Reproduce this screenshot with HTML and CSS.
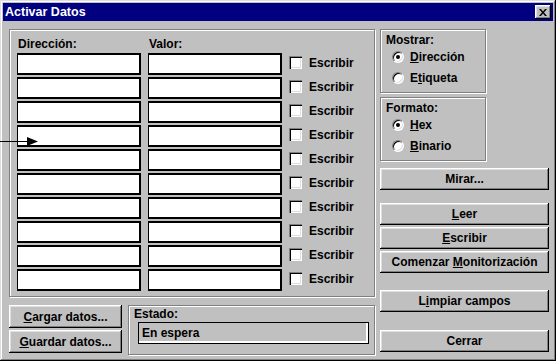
FILE: index.html
```html
<!DOCTYPE html>
<html lang="es">
<head>
    <meta charset="UTF-8">
    <title>Activar Datos</title>
    <link rel="stylesheet" href="styles.css">
</head>
<body>
    <div class="window">
        <div class="titlebar">
            <span class="title">Activar Datos</span>
            <span class="close">
                <svg width="8" height="7" viewBox="0 0 8 7"><path d="M0 0h2l2 2.5L6 0h2L5 3.5 8 7H6L4 4.5 2 7H0l3-3.5z" fill="#000"/></svg>
            </span>
        </div>

        <div class="content">
            <div class="main">
                <div class="group fields">
                    <div class="field-grid">
                        <span class="label">Dirección:</span>
                        <span class="label">Valor:</span>
                        <span></span>
                        <span></span>

                        <div class="edit"></div><div class="edit"></div><span class="check"></span><span class="check-label">Escribir</span>
                        <div class="edit"></div><div class="edit"></div><span class="check"></span><span class="check-label">Escribir</span>
                        <div class="edit"></div><div class="edit"></div><span class="check"></span><span class="check-label">Escribir</span>
                        <div class="edit"></div><div class="edit"></div><span class="check"></span><span class="check-label">Escribir</span>
                        <div class="edit"></div><div class="edit"></div><span class="check"></span><span class="check-label">Escribir</span>
                        <div class="edit"></div><div class="edit"></div><span class="check"></span><span class="check-label">Escribir</span>
                        <div class="edit"></div><div class="edit"></div><span class="check"></span><span class="check-label">Escribir</span>
                        <div class="edit"></div><div class="edit"></div><span class="check"></span><span class="check-label">Escribir</span>
                        <div class="edit"></div><div class="edit"></div><span class="check"></span><span class="check-label">Escribir</span>
                        <div class="edit"></div><div class="edit"></div><span class="check"></span><span class="check-label">Escribir</span>
                    </div>
                </div>

                <div class="bottom">
                    <div class="file-buttons">
                        <div class="button"><span><u>C</u>argar datos...</span></div>
                        <div class="button"><span><u>G</u>uardar datos...</span></div>
                    </div>
                    <div class="group status">
                        <span class="label">Estado:</span>
                        <div class="status-field">En espera</div>
                    </div>
                </div>
            </div>

            <div class="side">
                <div class="group options">
                    <span class="label">Mostrar:</span>
                    <div class="radio-row"><span class="radio checked"></span><span><u>D</u>irección</span></div>
                    <div class="radio-row"><span class="radio"></span><span>E<u>t</u>iqueta</span></div>
                </div>
                <div class="group options format">
                    <span class="label">Formato:</span>
                    <div class="radio-row"><span class="radio checked"></span><span><u>H</u>ex</span></div>
                    <div class="radio-row"><span class="radio"></span><span><u>B</u>inario</span></div>
                </div>

                <div class="button mirar"><span>Mirar...</span></div>
                <div class="button leer"><span><u>L</u>eer</span></div>
                <div class="button tight"><span><u>E</u>scribir</span></div>
                <div class="button tight"><span>Comenzar <u>M</u>onitorización</span></div>
                <div class="button limpiar"><span>L<u>i</u>mpiar campos</span></div>
                <div class="button cerrar"><span>Cerrar</span></div>
            </div>
        </div>

        <svg class="pointer" width="40" height="12" viewBox="0 0 40 12">
            <line x1="0" y1="5.5" x2="28" y2="5.5" stroke="#000" stroke-width="1"/>
            <polygon points="27,1 38,5.5 27,10" fill="#000"/>
        </svg>
    </div>
</body>
</html>
```

FILE: styles.css
```css
* {
    box-sizing: border-box;
}

body {
    margin: 0;
    font-family: 'Liberation Sans', Arial, sans-serif;
    font-size: 12px;
    font-weight: bold;
    color: #000;
    background: #c0c0c0;
}

.window {
    position: relative;
    width: 556px;
    height: 361px;
    padding: 3px;
    background: #c0c0c0;
    box-shadow: inset -1px -1px 0 #000, inset 1px 1px 0 #dfdfdf,
                inset -2px -2px 0 #808080, inset 2px 2px 0 #fff;
}

.titlebar {
    display: flex;
    align-items: center;
    justify-content: space-between;
    height: 18px;
    padding: 0 2px;
    background: #000080;
    color: #fff;
}

.title {
    font-size: 12.5px;
}

.close {
    display: flex;
    align-items: center;
    justify-content: center;
    width: 16px;
    height: 14px;
    background: #c0c0c0;
    box-shadow: inset -1px -1px 0 #000, inset 1px 1px 0 #fff,
                inset -2px -2px 0 #808080, inset 2px 2px 0 #dfdfdf;
}

.content {
    display: flex;
    gap: 5px;
    padding: 8px 4px 0 6px;
}

.main {
    width: 366px;
}

.side {
    width: 169px;
}

.group {
    border: 1px solid #808080;
    box-shadow: 1px 1px 0 #fff, inset 1px 1px 0 #fff;
}

.label {
    display: block;
    line-height: 13px;
    padding-left: 1px;
}

.fields {
    height: 268px;
    padding: 8px 5px 5px 7px;
}

.field-grid {
    display: grid;
    grid-template-columns: 124px 134px 13px auto;
    grid-template-rows: 13px;
    grid-auto-rows: 22px;
    column-gap: 7px;
    row-gap: 2px;
    align-items: center;
}

.edit {
    height: 22px;
    background: #fff;
    border: 2px solid #000;
    border-left-width: 1px;
}

.check {
    width: 13px;
    height: 13px;
    margin-top: -3px;
    background: #fff;
    box-shadow: inset 1px 1px 0 #808080, inset 2px 2px 0 #000,
                inset -1px -1px 0 #fff, inset -2px -2px 0 #dfdfdf;
}

.check-label {
    margin-top: -2px;
}

.bottom {
    display: flex;
    gap: 6px;
    margin-top: 8px;
}

.file-buttons {
    display: flex;
    flex-direction: column;
    gap: 2px;
    width: 113px;
}

.file-buttons .button {
    height: 23px;
}

.button {
    display: flex;
    align-items: center;
    justify-content: center;
    height: 22px;
    background: #c0c0c0;
    box-shadow: inset -1px -1px 0 #000, inset 1px 1px 0 #fff,
                inset -2px -2px 0 #808080, inset 2px 2px 0 #dfdfdf;
}

.status {
    width: 247px;
    height: 50px;
    padding: 2px 5px 0 4px;
}

.status-field {
    height: 22px;
    margin: 1px 0 0 5px;
    padding-left: 3px;
    line-height: 20px;
    border: 1px solid #000;
    box-shadow: inset -2px -2px 0 #fff;
    background: #c0c0c0;
}

.options {
    width: 106px;
    height: 64px;
    padding: 4px 4px 0 4px;
}

.format {
    margin-top: 4px;
}

.radio-row {
    display: flex;
    align-items: center;
    gap: 6px;
    height: 20px;
    padding-left: 7px;
}

.radio-row + .radio-row {
    margin-top: 1px;
}

.radio {
    position: relative;
    width: 12px;
    height: 12px;
    border-radius: 50%;
    background: #fff;
    border: 1px solid;
    border-color: #808080 #fff #fff #808080;
    box-shadow: inset 1px 1px 0 #000, inset -1px -1px 0 #dfdfdf;
}

.radio.checked::after {
    content: "";
    position: absolute;
    left: 3px;
    top: 3px;
    width: 4px;
    height: 4px;
    border-radius: 50%;
    background: #000;
}

.mirar {
    margin-top: 7px;
}

.leer {
    margin-top: 13px;
}

.tight {
    margin-top: 2px;
}

.limpiar {
    margin-top: 17px;
}

.cerrar {
    margin-top: 18px;
}

.pointer {
    position: absolute;
    left: 0;
    top: 136px;
}
```
